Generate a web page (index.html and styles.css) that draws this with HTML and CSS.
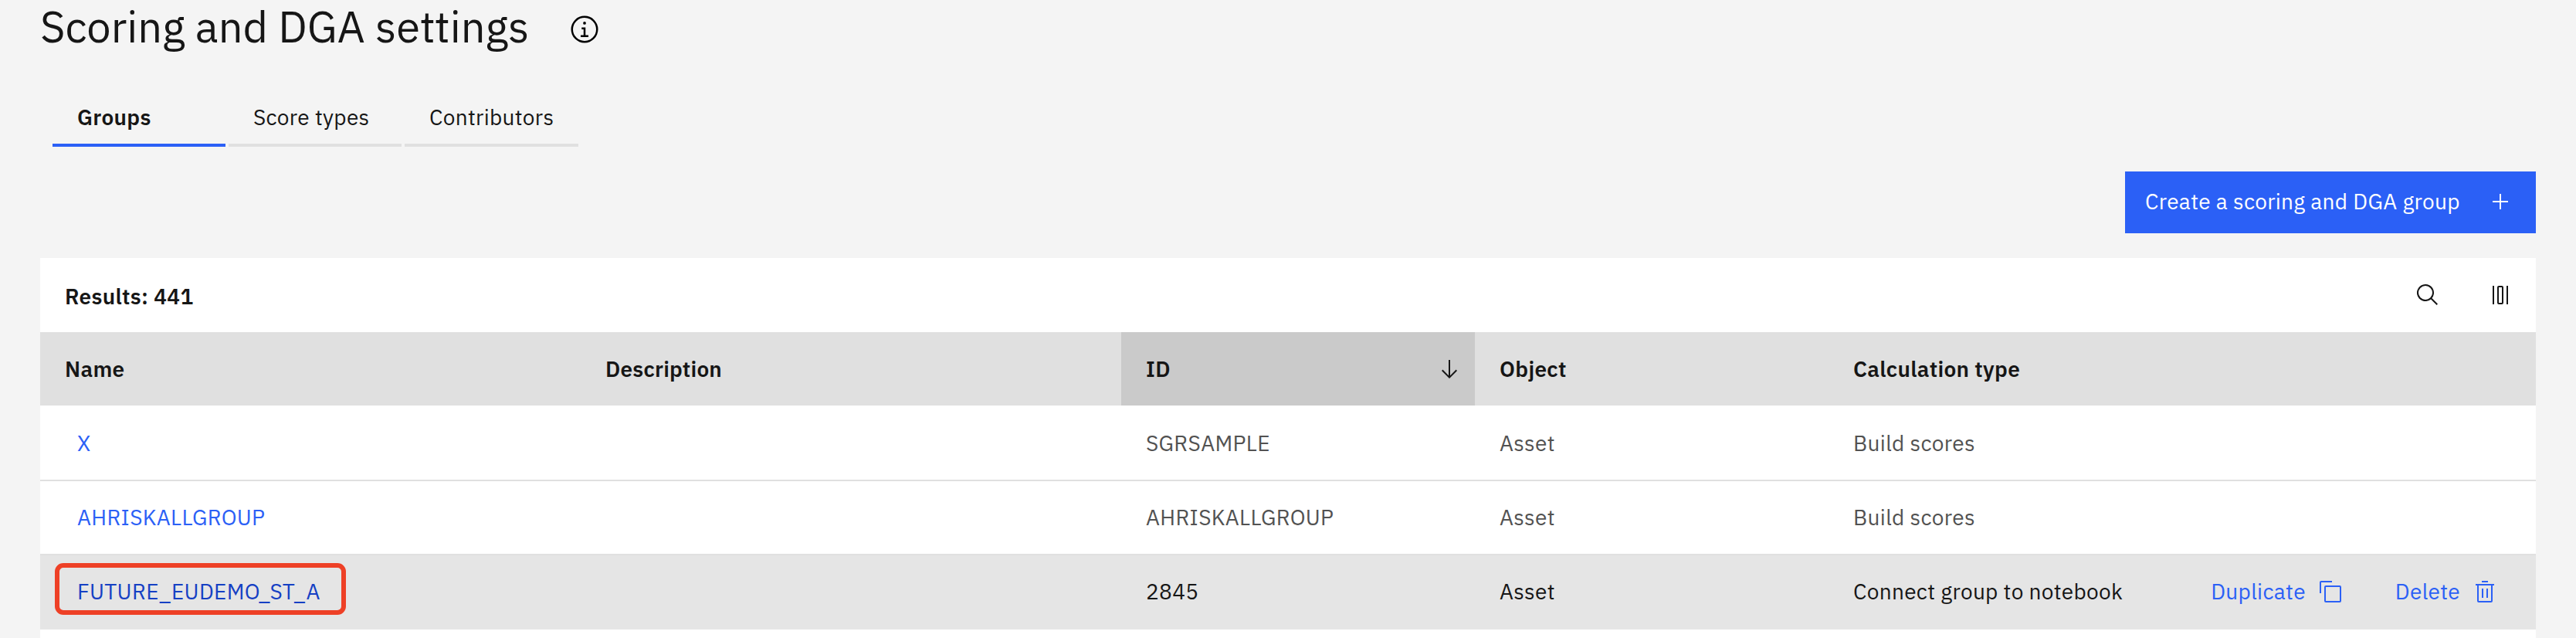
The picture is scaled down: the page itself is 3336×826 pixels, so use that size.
FILE: index.html
```html
<!DOCTYPE html>
<html lang="en">
<head>
<meta charset="utf-8">
<title>Scoring and DGA settings</title>
<link rel="stylesheet" href="styles.css">
</head>
<body>
<header class="page-header">
  <h1 class="page-title">Scoring and DGA settings</h1>
  <svg class="info-icon" viewBox="0 0 32 32" aria-label="Information"><path d="M17 22V14H13v2h2v6H12v2h8V22zM16 8a1.5 1.5 0 1 0 1.5 1.5A1.5 1.5 0 0 0 16 8z"/><path d="M16 30A14 14 0 1 1 30 16 14 14 0 0 1 16 30ZM16 4A12 12 0 1 0 28 16 12 12 0 0 0 16 4Z"/></svg>
</header>
<nav class="tabs">
  <a class="tab tab-active">Groups</a>
  <a class="tab">Score types</a>
  <a class="tab">Contributors</a>
</nav>
<div class="actions">
  <button class="create-button"><span>Create a scoring and DGA group</span>
    <svg class="icon" viewBox="0 0 32 32"><path d="M17 15V6H15v9H6v2h9v9h2V17h9V15z"/></svg>
  </button>
</div>
<section class="panel">
  <div class="toolbar">
    <span class="results">Results: 441</span>
    <div class="tools">
      <svg class="icon" viewBox="0 0 32 32"><path d="M29,27.5859l-7.5521-7.5521a11.0177,11.0177,0,1,0-1.4141,1.4141L27.5859,29ZM4,13a9,9,0,1,1,9,9A9.01,9.01,0,0,1,4,13Z"/></svg>
      <svg class="icon" viewBox="0 0 32 32"><path d="M24 4h2v24h-2zM18 6V26H14V6h4m0-2H14a2 2 0 0 0-2 2V26a2 2 0 0 0 2 2h4a2 2 0 0 0 2-2V6a2 2 0 0 0-2-2ZM6 4h2v24H6z"/></svg>
    </div>
  </div>
  <div class="row head">
    <div class="cell">Name</div>
    <div class="cell description">Description</div>
    <div class="cell sorted"><span>ID</span>
      <svg class="icon" viewBox="0 0 32 32"><path d="M24.59 16.59L17 24.17V4H15V24.17L7.41 16.59 6 18 16 28 26 18z"/></svg>
    </div>
    <div class="cell">Object</div>
    <div class="cell">Calculation type</div>
  </div>
  <div class="row">
    <div class="cell"><a class="link">X</a></div>
    <div class="cell"></div>
    <div class="cell">SGRSAMPLE</div>
    <div class="cell">Asset</div>
    <div class="cell">Build scores</div>
  </div>
  <div class="row">
    <div class="cell"><a class="link">AHRISKALLGROUP</a></div>
    <div class="cell"></div>
    <div class="cell">AHRISKALLGROUP</div>
    <div class="cell">Asset</div>
    <div class="cell">Build scores</div>
  </div>
  <div class="row hovered">
    <div class="cell"><a class="link">FUTURE_EUDEMO_ST_A</a><span class="highlight"></span></div>
    <div class="cell"></div>
    <div class="cell">2845</div>
    <div class="cell">Asset</div>
    <div class="cell">Connect group to notebook
      <div class="row-actions">
        <a class="row-action duplicate">Duplicate
          <svg class="icon" viewBox="0 0 32 32"><path d="M28,10V28H10V10H28m0-2H10a2,2,0,0,0-2,2V28a2,2,0,0,0,2,2H28a2,2,0,0,0,2-2V10a2,2,0,0,0-2-2Z"/><path d="M4,18H2V4A2,2,0,0,1,4,2H18V4H4Z"/></svg>
        </a>
        <a class="row-action">Delete
          <svg class="icon" viewBox="0 0 32 32"><path d="M12 12h2v12h-2zM18 12h2v12h-2z"/><path d="M4 6V8H6V28a2 2 0 0 0 2 2H24a2 2 0 0 0 2-2V8h2V6zM8 28V8H24V28zM12 2h8v2h-8z"/></svg>
        </a>
      </div>
    </div>
  </div>
</section>
</body>
</html>
```
FILE: styles.css
```css
* { box-sizing: border-box; }

body {
  margin: 0;
  height: 826px;
  overflow: hidden;
  display: flex;
  flex-direction: column;
  background: #f4f4f4;
  color: #161616;
  font: 400 28px/36px "IBM Plex Sans", Roboto, "Noto Sans", sans-serif;
  letter-spacing: 0.32px;
  white-space: nowrap;
}

svg {
  display: block;
  flex: none;
  fill: currentColor;
}

.icon {
  width: 32px;
  height: 32px;
}

.page-header {
  display: flex;
  align-items: center;
  gap: 52px;
  height: 76px;
  padding-left: 52px;
}

.page-title {
  margin: 0 0 8px;
  font-size: 56px;
  line-height: 68px;
  font-weight: 400;
  letter-spacing: 0;
}

.info-icon {
  width: 40px;
  height: 40px;
  color: #000;
}

.tabs {
  display: flex;
  gap: 4px;
  height: 114px;
  padding: 38px 0 0 68px;
}

.tab {
  width: 224px;
  padding: 20px 0 0 32px;
  border-bottom: 4px solid #e0e0e0;
}

.tab:last-child { width: 225px; }

.tab-active {
  border-color: #2b60f6;
  font-weight: 600;
}

.actions {
  display: flex;
  justify-content: flex-end;
  padding: 32px 52px;
}

.create-button {
  display: flex;
  align-items: center;
  justify-content: space-between;
  width: 532px;
  height: 80px;
  padding: 0 30px 2px 26px;
  border: 0;
  background: #2b60f6;
  color: #fff;
  font: inherit;
  letter-spacing: inherit;
}

.panel {
  flex: 1;
  margin: 0 52px;
  background: #fff;
}

.toolbar {
  display: flex;
  align-items: center;
  justify-content: space-between;
  height: 96px;
  padding: 4px 30px 0 32px;
}

.results { font-weight: 600; }

.tools {
  display: flex;
  gap: 62px;
  padding-bottom: 4px;
}

.row {
  display: grid;
  grid-template-columns: 700px 700px 458px 458px 1fr;
  height: 96px;
  border-bottom: 2px solid #e0e0e0;
  color: #525252;
}

.cell {
  position: relative;
  display: flex;
  align-items: center;
  padding-left: 32px;
}

.head {
  height: 95px;
  border: 0;
  background: #e0e0e0;
  color: #161616;
  font-weight: 600;
}

.head + .row {
  height: 98px;
  padding-top: 2px;
}

.description { letter-spacing: 0.18px; }

.sorted {
  justify-content: space-between;
  padding-right: 17px;
  background: #cacaca;
}

.link {
  padding-left: 16px;
  color: #2b60f6;
}

.hovered {
  border-color: #e5e5e5;
  background: #e5e5e5;
  color: #161616;
}

.hovered .link { color: #1540c4; }

/* Callout frame drawn over the selected group's name */
.highlight {
  position: absolute;
  left: 19px;
  top: 10px;
  width: 377px;
  height: 67px;
  border: 6px solid #ee4026;
  border-radius: 11px;
}

.row-actions {
  display: flex;
  gap: 68px;
  margin-left: auto;
  padding-right: 50px;
}

.row-action {
  display: flex;
  align-items: center;
  gap: 16px;
  color: #2b60f6;
}
```
